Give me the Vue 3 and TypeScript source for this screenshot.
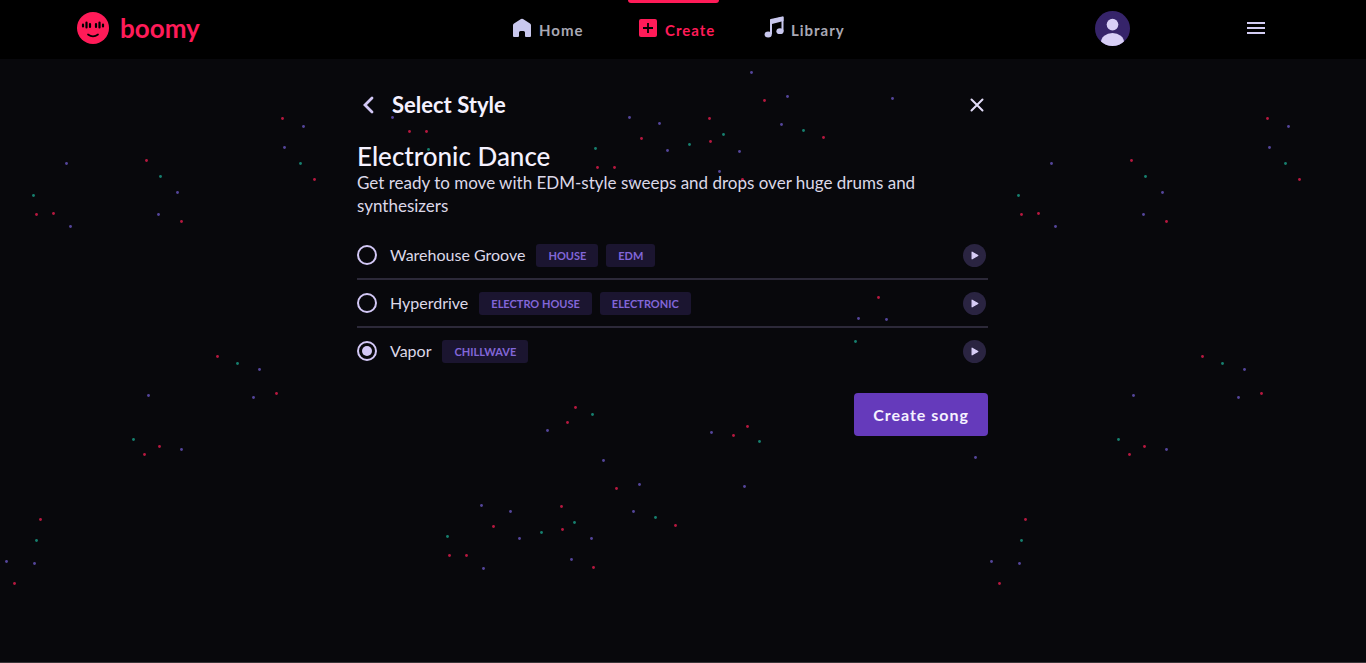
<script setup lang="ts">
import { ref } from 'vue'

interface SongStyle {
  id: string
  name: string
  tags: string[]
}

type Dot = [number, number]

const styles: SongStyle[] = [
  { id: 'warehouse-groove', name: 'Warehouse Groove', tags: ['House', 'EDM'] },
  { id: 'hyperdrive', name: 'Hyperdrive', tags: ['Electro House', 'Electronic'] },
  { id: 'vapor', name: 'Vapor', tags: ['Chillwave'] },
]

const selected = ref<string>('vapor')

// Confetti dots of one background tile.
const confetti: { color: string; dots: Dot[] }[] = [
  {
    color: '#b8173f',
    dots: [
      [36, 156], [53, 155], [146, 102], [181, 163], [282, 60], [314, 121], [217, 298], [276, 335],
      [159, 388], [144, 396], [40, 461], [14, 525], [764, 42], [709, 60], [823, 79], [641, 80],
      [710, 83], [597, 109], [614, 109], [742, 121], [409, 73], [426, 73], [878, 239], [575, 349],
      [567, 364], [616, 430], [675, 467], [733, 377], [747, 368], [493, 468], [561, 448], [562, 471],
      [449, 497], [466, 497], [593, 509],
    ],
  },
  {
    color: '#15806f',
    dots: [
      [33, 137], [160, 118], [300, 105], [237, 305], [133, 381], [36, 482], [803, 72], [689, 86],
      [723, 76], [595, 90], [428, 91], [855, 283], [592, 356], [655, 459], [759, 383], [574, 464],
      [541, 474], [447, 478],
    ],
  },
  {
    color: '#54459c',
    dots: [
      [66, 105], [70, 168], [177, 134], [158, 156], [303, 68], [284, 89], [259, 311], [253, 339],
      [148, 337], [181, 391], [6, 503], [34, 505], [751, 14], [787, 38], [892, 40], [629, 59],
      [659, 65], [781, 66], [667, 92], [739, 93], [631, 122], [719, 113], [392, 59], [858, 260],
      [886, 261], [547, 372], [603, 402], [639, 426], [633, 453], [711, 374], [744, 428], [481, 447],
      [510, 453], [519, 480], [591, 480], [483, 510], [571, 501], [975, 399],
    ],
  },
]
</script>

<template>
  <div class="page">
    <header class="topbar">
      <a class="brand" href="#home" aria-label="boomy">
        <svg class="brand-mark" viewBox="0 0 32 32" aria-hidden="true">
          <circle cx="16" cy="16" r="16" fill="#ff1b58" />
          <g stroke="#000" stroke-width="2.200" stroke-linecap="round">
            <path d="M6 12.500v2M9.500 10.500v5M13 12v3M19 12v3M22.500 10.500v5M26 12.500v2" />
          </g>
          <path d="M11 22.500q5 3.600 10 0" fill="none" stroke="#000" stroke-width="1.700" stroke-linecap="round" />
        </svg>
        <span>boomy</span>
      </a>

      <nav class="nav" aria-label="Main">
        <a class="nav-item" href="#home">
          <svg class="nav-icon" viewBox="0 0 20 20" aria-hidden="true">
            <path d="M1 7.200Q1 6 2 5.400L9 1Q10 .400 11 1L18 5.400Q19 6 19 7.200V18Q19 19 18 19H14Q13 19 13 18V14.500Q13 13 11.500 13H8.500Q7 13 7 14.500V18Q7 19 6 19H2Q1 19 1 18Z" fill="#c9c8ee" />
          </svg>
          <span>Home</span>
        </a>
        <a class="nav-item active" href="#create" aria-current="page">
          <svg class="nav-icon" viewBox="0 0 20 20" aria-hidden="true">
            <rect x="1" y="1" width="18" height="18" rx="2" fill="#ff1b58" />
            <path d="M10 5v10M5 10h10" stroke="#000" stroke-width="1.800" />
          </svg>
          <span>Create</span>
        </a>
        <a class="nav-item" href="#library">
          <svg class="nav-icon tall" viewBox="0 0 20 22" aria-hidden="true">
            <path d="M7 18V4L18.500 1.500V15" fill="none" stroke="#c9c8ee" stroke-width="2" stroke-linejoin="round" />
            <path d="M6 4L19.500 .500V5L6 8.500Z" fill="#c9c8ee" />
            <ellipse cx="4.200" cy="18.500" rx="3.600" ry="2.900" fill="#c9c8ee" />
            <ellipse cx="16" cy="15.200" rx="3.600" ry="2.900" fill="#c9c8ee" />
          </svg>
          <span>Library</span>
        </a>
      </nav>

      <div class="actions">
        <button class="avatar" type="button" aria-label="Account">
          <svg viewBox="0 0 36 36" aria-hidden="true">
            <clipPath id="avatar-clip"><circle cx="18" cy="18" r="18" /></clipPath>
            <circle cx="18" cy="18" r="18" fill="#36246a" />
            <g clip-path="url(#avatar-clip)" fill="#d8cff6">
              <circle cx="18" cy="14" r="6" />
              <ellipse cx="18" cy="33" rx="12" ry="10.500" />
            </g>
          </svg>
        </button>
        <button class="menu" type="button" aria-label="Menu">
          <svg viewBox="0 0 18 14" aria-hidden="true">
            <path d="M0 2h18M0 7h18M0 12h18" stroke="#d3cdf3" stroke-width="2" />
          </svg>
        </button>
      </div>
    </header>

    <div class="stage">
      <svg class="confetti" aria-hidden="true">
        <defs>
          <pattern id="confetti-tile" y="-1" width="985" height="985" patternUnits="userSpaceOnUse">
            <g v-for="group in confetti" :key="group.color" :fill="group.color">
              <circle v-for="([x, y], i) in group.dots" :key="i" :cx="x + 0.5" :cy="y + 0.5" r="1.400" />
            </g>
          </pattern>
        </defs>
        <rect width="100%" height="100%" fill="url(#confetti-tile)" />
      </svg>

      <main class="panel">
        <div class="panel-head">
          <button class="icon-button" type="button" aria-label="Back">
            <svg class="back" viewBox="0 0 12 18" aria-hidden="true">
              <path d="M10 2L3 9l7 7" fill="none" stroke="#d3c8f6" stroke-width="2.800" stroke-linecap="round" />
            </svg>
          </button>
          <h1>Select Style</h1>
          <button class="icon-button" type="button" aria-label="Close">
            <svg class="close" viewBox="0 0 14 14" aria-hidden="true">
              <path d="M1.500 1.500l11 11M12.500 1.500l-11 11" stroke="#e2dcf8" stroke-width="2" stroke-linecap="round" />
            </svg>
          </button>
        </div>

        <h2>Electronic Dance</h2>
        <p class="description">
          Get ready to move with EDM-style sweeps and drops over huge drums and synthesizers
        </p>

        <form @submit.prevent>
          <ul class="styles">
            <li v-for="style in styles" :key="style.id" class="style-row">
              <input :id="style.id" v-model="selected" type="radio" name="style" :value="style.id" />
              <label :for="style.id">{{ style.name }}</label>
              <div class="tags">
                <span v-for="tag in style.tags" :key="tag" class="tag">{{ tag }}</span>
              </div>
              <button class="play" type="button" :aria-label="`Play ${style.name}`">
                <svg viewBox="0 0 24 24" aria-hidden="true">
                  <path d="M9.500 8.500v7l6-3.500z" fill="#d9cff8" stroke="#d9cff8" stroke-width="1.200" stroke-linejoin="round" />
                </svg>
              </button>
            </li>
          </ul>
          <button class="submit" type="submit">Create song</button>
        </form>
      </main>
    </div>
  </div>
</template>

<style>
body {
  margin: 0;
  background: #08080c;
}
</style>

<style scoped>
.page {
  box-sizing: border-box;
  display: flex;
  flex-direction: column;
  min-height: 100vh;
  border-bottom: 1px solid #393539;
  font-family: Lato, "Noto Sans", sans-serif;
  color: #dcd8e8;
}

button {
  padding: 0;
  border: 0;
  background: none;
  font-family: inherit;
  cursor: pointer;
}

svg {
  display: block;
}

.topbar {
  display: grid;
  grid-template-columns: 1fr auto 1fr;
  align-items: center;
  height: 59px;
  padding: 0 96px 0 77px;
  background: #000;
}

.brand {
  display: flex;
  align-items: center;
  gap: 11px;
  height: 56px;
  align-self: start;
  color: #ff1b58;
  font-size: 26px;
  font-weight: 700;
  line-height: 32px;
  text-decoration: none;
}

.brand-mark {
  width: 32px;
  height: 32px;
}

.nav {
  display: grid;
  grid-auto-columns: 91px;
  grid-auto-flow: column;
  align-self: stretch;
  gap: 35px;
}

.nav-item {
  position: relative;
  display: flex;
  align-items: center;
  gap: 7px;
  padding-left: 10px;
  color: #a9a8b4;
  font-size: 15px;
  font-weight: 700;
  line-height: 20px;
  letter-spacing: 1px;
  text-decoration: none;
}

.nav-item.active {
  color: #ff1b58;
}

.nav-item.active::before {
  position: absolute;
  top: 0;
  right: 0;
  left: 0;
  height: 3px;
  border-radius: 0 0 3px 3px;
  background: #ff1b58;
  content: "";
}

.nav-icon {
  width: 20px;
  height: 20px;
  margin-bottom: 4px;
}

.nav-icon.tall {
  height: 22px;
  margin-bottom: 6px;
}

.actions {
  display: flex;
  align-items: center;
  align-self: start;
  justify-content: flex-end;
  gap: 112px;
  height: 56px;
}

.avatar {
  width: 35px;
  height: 35px;
}

.menu {
  display: flex;
  justify-content: center;
  align-items: center;
  width: 28px;
  height: 28px;
}

.menu svg {
  width: 18px;
  height: 14px;
}

.stage {
  position: relative;
  display: flex;
  flex: 1;
  justify-content: center;
  padding: 31px 21px 31px 0;
}

.confetti {
  position: absolute;
  inset: 0;
  width: 100%;
  height: 100%;
}

.panel {
  position: relative;
  width: 100%;
  max-width: 631px;
}

.panel-head {
  display: flex;
  align-items: center;
  gap: 13px;
  height: 30px;
  margin-bottom: 21px;
}

.icon-button {
  display: flex;
  justify-content: center;
  align-items: center;
  width: 22px;
  height: 30px;
}

.back {
  width: 12px;
  height: 18px;
}

.close {
  width: 14px;
  height: 14px;
}

h1 {
  flex: 1;
  margin: 0;
  color: #f5f1ff;
  font-size: 22px;
  font-weight: 700;
  line-height: 30px;
}

h2 {
  margin: 0;
  color: #f5f1ff;
  font-size: 26px;
  font-weight: 500;
  line-height: 30px;
}

.description {
  margin: 0 0 15px;
  font-size: 17px;
  line-height: 23px;
}

form {
  display: flex;
  flex-direction: column;
  align-items: flex-end;
}

.styles {
  align-self: stretch;
  margin: 0 0 19px;
  padding: 0;
  list-style: none;
}

.style-row {
  display: flex;
  align-items: center;
  height: 46px;
}

.style-row + .style-row {
  border-top: 2px solid #2c2939;
}

.style-row input {
  display: grid;
  place-content: center;
  box-sizing: border-box;
  width: 20px;
  height: 20px;
  margin: 0 13px 0 0;
  border: 2px solid #d3c8f6;
  border-radius: 50%;
  appearance: none;
}

.style-row input:checked::before {
  width: 10px;
  height: 10px;
  border-radius: 50%;
  background: #d3c8f6;
  content: "";
}

.style-row label {
  margin-right: 11px;
  font-size: 16px;
  line-height: 20px;
}

.tags {
  display: flex;
  flex: 1;
  gap: 8px;
}

.tag {
  padding: 0 12px;
  border-radius: 3px;
  background: #1b1530;
  color: #8266d8;
  font-size: 11px;
  font-weight: 700;
  line-height: 23px;
  text-transform: uppercase;
}

.play {
  width: 23px;
  height: 23px;
  margin-right: 2px;
  border-radius: 50%;
  background: #2a2441;
}

.submit {
  height: 43px;
  padding: 0 19px;
  border-radius: 4px;
  background: #653abb;
  color: #f5f1ff;
  font-size: 16px;
  font-weight: 700;
  letter-spacing: 1px;
}
</style>
